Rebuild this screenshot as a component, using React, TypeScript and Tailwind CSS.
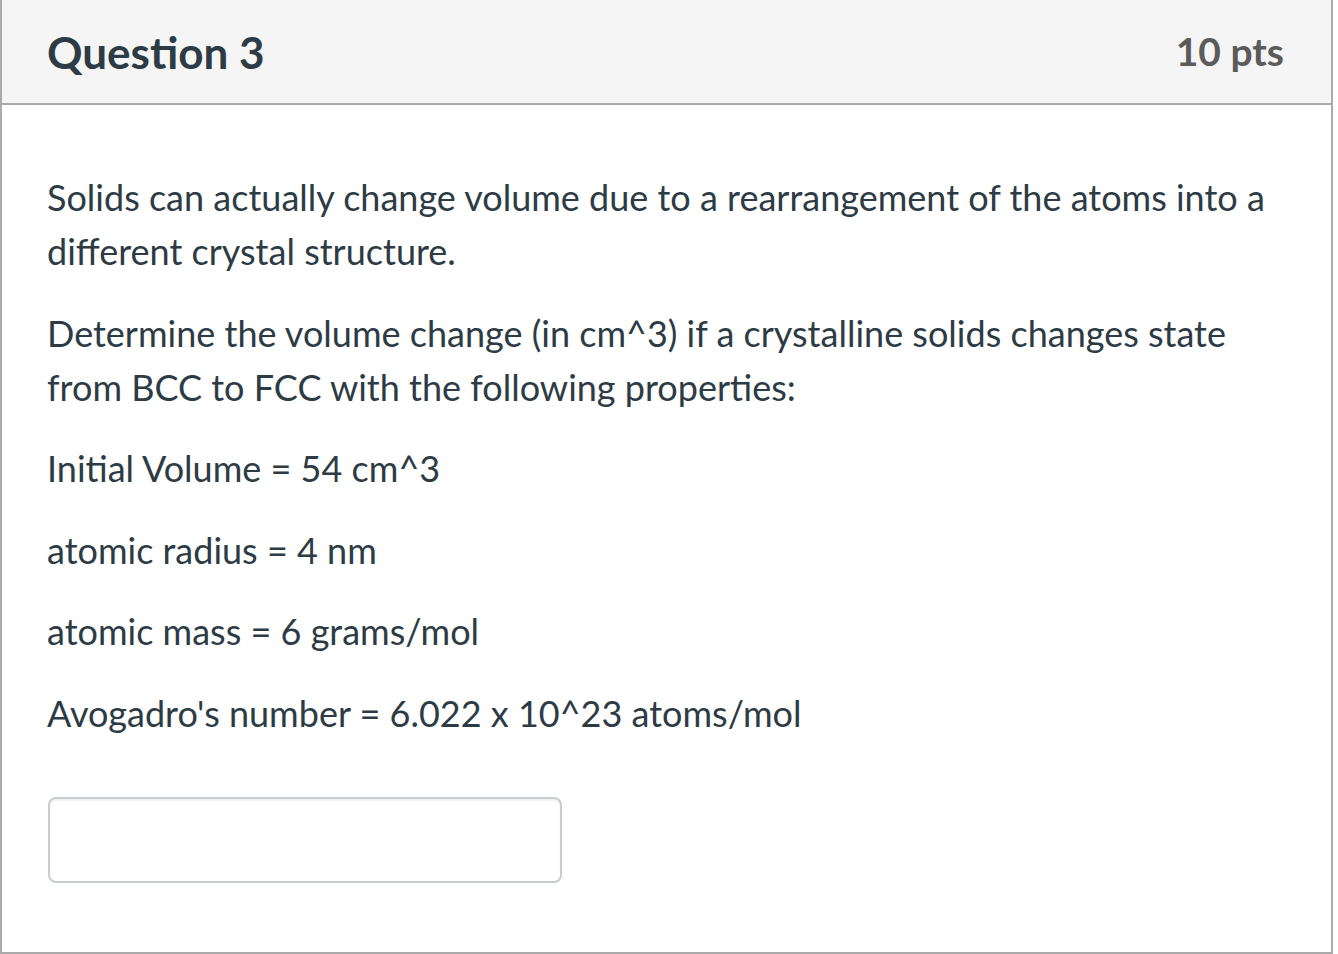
import React from "react";

export default function App() {
  const font = { fontFamily: "Lato, 'Open Sans', sans-serif" };
  return (
    <div className="w-[1338px] h-[954px] bg-white" style={font}>
      <div className="w-[1333px] h-[954px] flex flex-col border-l-2 border-r-2 border-b-2 border-[#aaaaaa] bg-white">
        <div className="h-[105px] shrink-0 bg-[#f5f5f5] border-b-2 border-[#aaaaaa] flex items-center justify-between pl-[45px] pr-[47px]">
          <div className="text-[44px] font-bold text-[#2d3b45] leading-none font-['Lato']">Question 3</div>
          <div className="text-[39px] font-bold text-[#5b5b5b] leading-none font-['Lato']">10 pts</div>
        </div>
        <div className="pt-[65px] px-[45px] text-[36px] leading-[54px] text-[#2d3b45] font-['Lato']">
          <p className="mb-[27.6px]">
            Solids can actually change volume due to a rearrangement of the atoms into a different crystal structure.
          </p>
          <p className="mb-[27.6px]">
            Determine the volume change (in cm^3) if a crystalline solids changes state from BCC to FCC with the following properties:
          </p>
          <p className="mb-[27.6px]">Initial Volume = 54 cm^3</p>
          <p className="mb-[27.6px]">atomic radius = 4 nm</p>
          <p className="mb-[27.6px]">atomic mass = 6 grams/mol</p>
          <p>Avogadro's number = 6.022 x 10^23 atoms/mol</p>
          <div className="mt-[57px] ml-[1px] w-[514px] h-[86px] border-2 border-[#c7cdd1] rounded-[8px] bg-white shadow-[inset_0_2px_2px_rgba(0,0,0,0.06)]" />
        </div>
      </div>
    </div>
  );
}
